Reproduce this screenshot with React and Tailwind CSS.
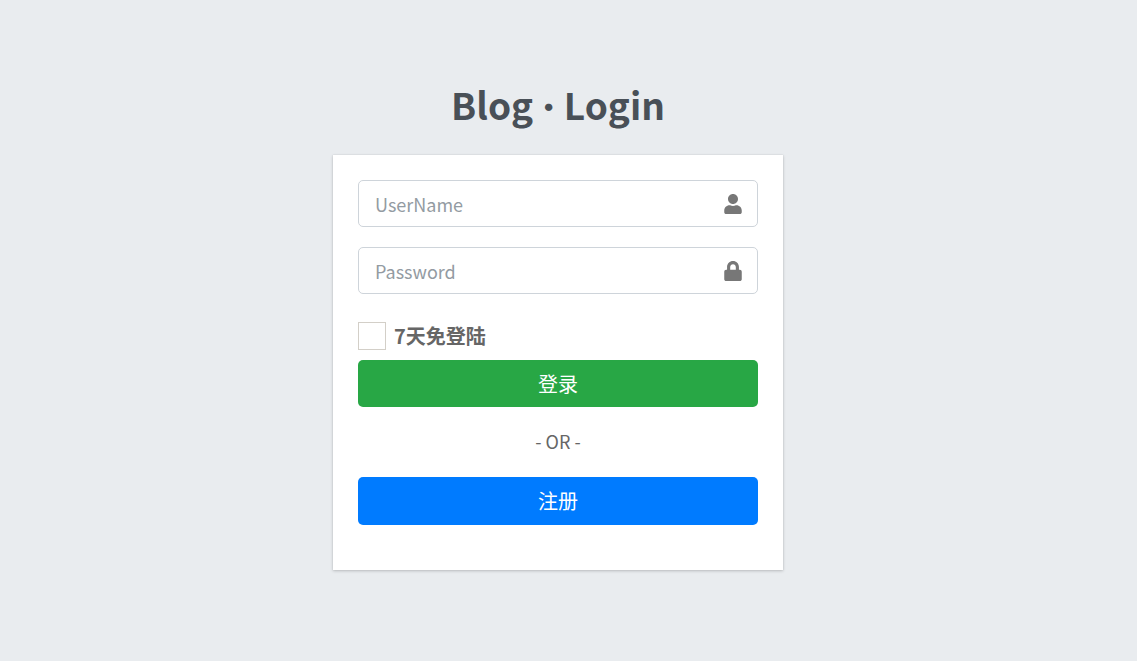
import { FaUser, FaLock } from "react-icons/fa";

function Field({ id, type, label, Icon }) {
  return (
    <div className="flex h-[47px] items-center rounded-[5px] border border-[#ced4da] bg-white">
      <input
        id={id}
        name={id}
        type={type}
        placeholder={label}
        aria-label={label}
        className="h-full min-w-0 flex-1 bg-transparent px-4 text-lg text-[#495057] outline-none placeholder:text-[#939ba2]"
      />
      <label htmlFor={id} className="flex w-12 justify-center text-[#777777]">
        <Icon size={20} aria-hidden="true" />
      </label>
    </div>
  );
}

export default function App() {
  return (
    <main className="flex min-h-screen flex-col items-center bg-[#e9ecef] pt-[78px] pr-[21px] font-['Noto_Sans_CJK_SC',sans-serif] text-[#666666]">
      <h1 className="h-[54px] text-[37px] leading-[52px] font-bold text-[#495057]">
        Blog <span className="font-['Inter',sans-serif] font-black">·</span> Login
      </h1>
      <form
        className="mt-[23px] w-full max-w-[450px] bg-white px-[25px] pt-[25px] pb-[45px] shadow-[0_0_1px_rgba(0,0,0,0.13),0_1px_3px_rgba(0,0,0,0.2)]"
        onSubmit={(e) => e.preventDefault()}
      >
        <div className="flex flex-col gap-5">
          <Field id="username" type="text" label="UserName" Icon={FaUser} />
          <Field id="password" type="password" label="Password" Icon={FaLock} />
        </div>
        <div className="mt-7 flex items-center gap-2">
          <input id="remember" type="checkbox" className="size-7 appearance-none border border-[#d3cfc8] bg-white checked:bg-[#007bff]" />
          <label htmlFor="remember" className="text-xl leading-7 font-bold">7天免登陆</label>
        </div>
        <button type="submit" className="mt-[10px] h-[47px] w-full rounded-[5px] bg-[#28a745] text-xl text-white">登录</button>
        <p className="mt-5 mb-[22px] text-center text-lg leading-7">- OR -</p>
        <button type="button" className="h-12 w-full rounded-[5px] bg-[#007bff] text-xl text-white">注册</button>
      </form>
    </main>
  );
}
